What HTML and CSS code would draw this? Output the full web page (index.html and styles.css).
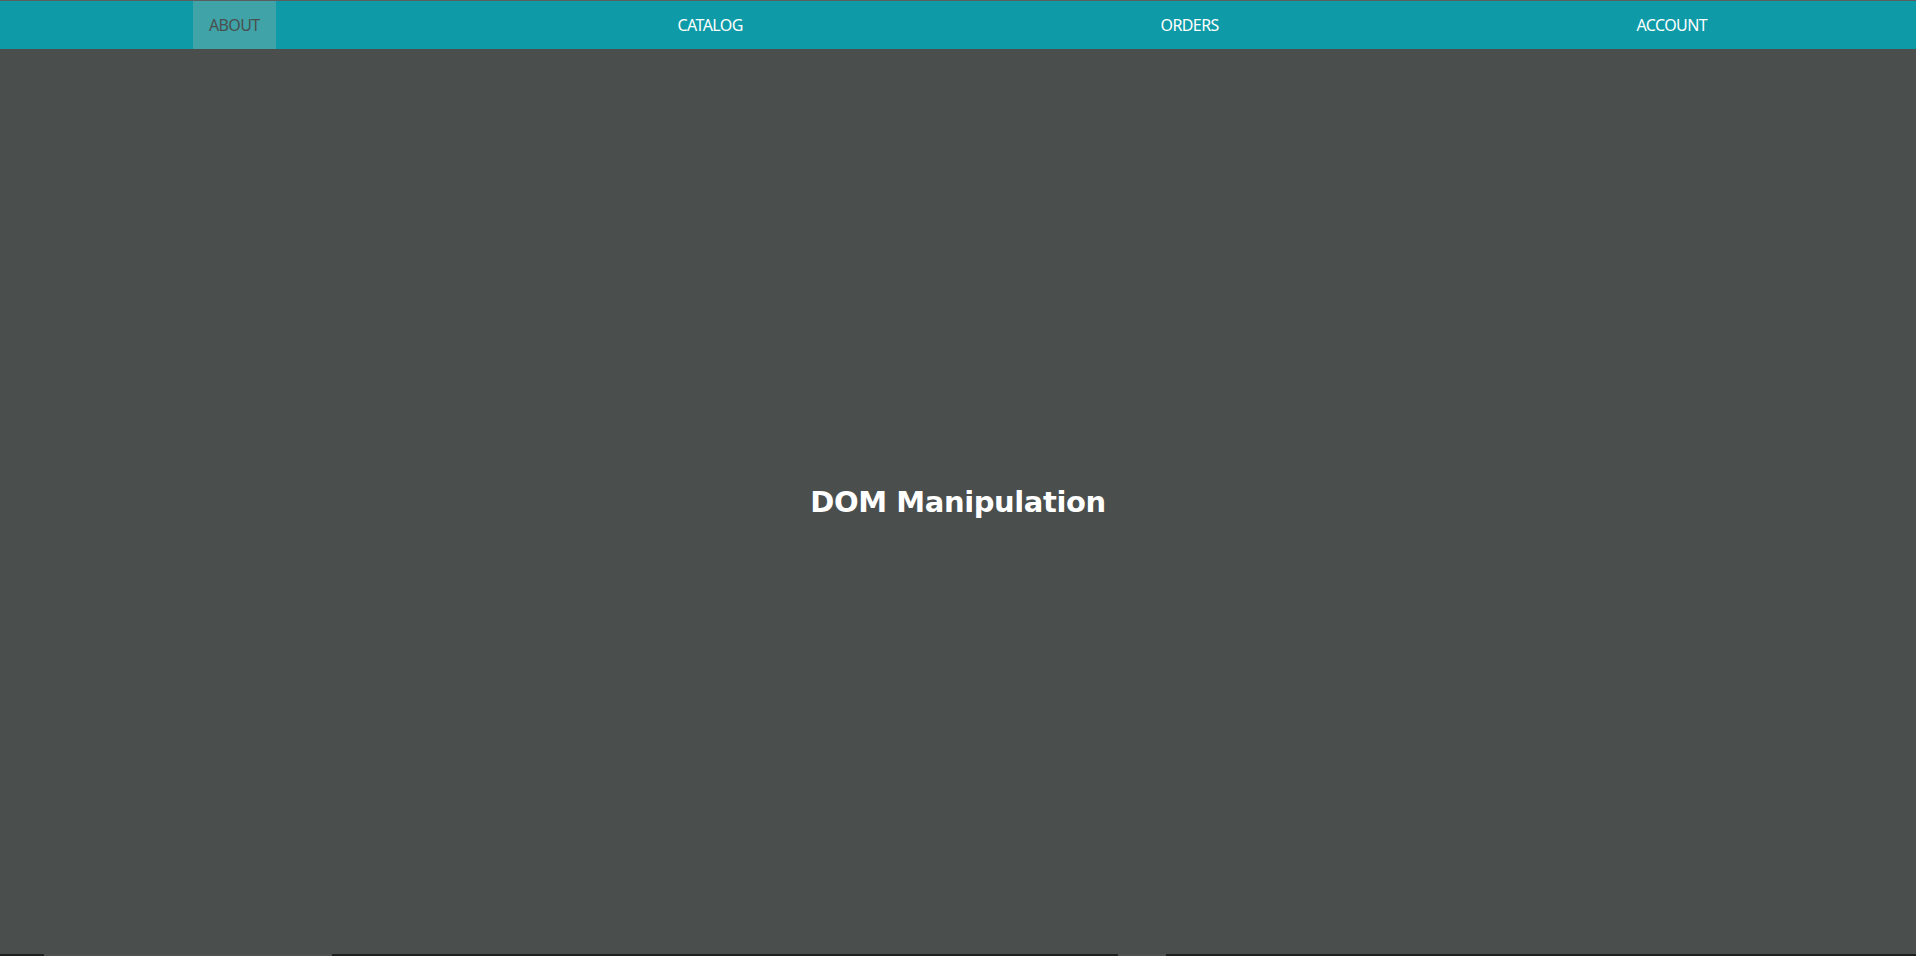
FILE: index.html
```html
<!DOCTYPE html>
<html lang="en">
<head>
<meta charset="utf-8">
<title>DOM Manipulation</title>
<link rel="stylesheet" href="styles.css">
</head>
<body>
<div class="page">
  <nav class="nav">
    <a class="nav-item active" href="#">ABOUT</a>
    <a class="nav-item" href="#">CATALOG</a>
    <a class="nav-item" href="#">ORDERS</a>
    <a class="nav-item" href="#">ACCOUNT</a>
  </nav>
  <main class="main">
    <h1 class="title">DOM Manipulation</h1>
  </main>
  <div class="bottom-strip">
    <span class="seg seg-a"></span>
    <span class="seg seg-b"></span>
  </div>
</div>
</body>
</html>
```

FILE: styles.css
```css
html, body {
  margin: 0;
  padding: 0;
  height: 100%;
}

body {
  background: #4a4f4e;
  font-family: "Noto Sans", "Open Sans", sans-serif;
  overflow: hidden;
}

.page {
  height: 100vh;
  display: flex;
  flex-direction: column;
  border-top: 1px solid #5a5e5e;
  box-sizing: border-box;
}

.nav {
  height: 48px;
  flex: 0 0 48px;
  background: #0e9aa7;
  display: flex;
  justify-content: space-around;
  align-items: stretch;
}

.nav-item {
  display: flex;
  align-items: center;
  padding: 0 16px;
  color: #ffffff;
  text-decoration: none;
  font-size: 16px;
  letter-spacing: -0.6px;
}

.nav-item.active {
  background: #3fa3a8;
  color: #4a4f4e;
}

.main {
  flex: 1;
  display: flex;
  align-items: center;
  justify-content: center;
}

.title {
  margin: 0;
  color: #ffffff;
  font-family: "DejaVu Sans", Verdana, sans-serif;
  font-weight: bold;
  font-size: 29px;
  letter-spacing: -0.4px;
}

.bottom-strip {
  flex: 0 0 2px;
  height: 2px;
  background: #1e1f1f;
  display: flex;
}

.seg {
  height: 2px;
  background: #4e5150;
}

.seg-a {
  margin-left: 44px;
  width: 288px;
}

.seg-b {
  margin-left: 786px;
  width: 48px;
}
```
